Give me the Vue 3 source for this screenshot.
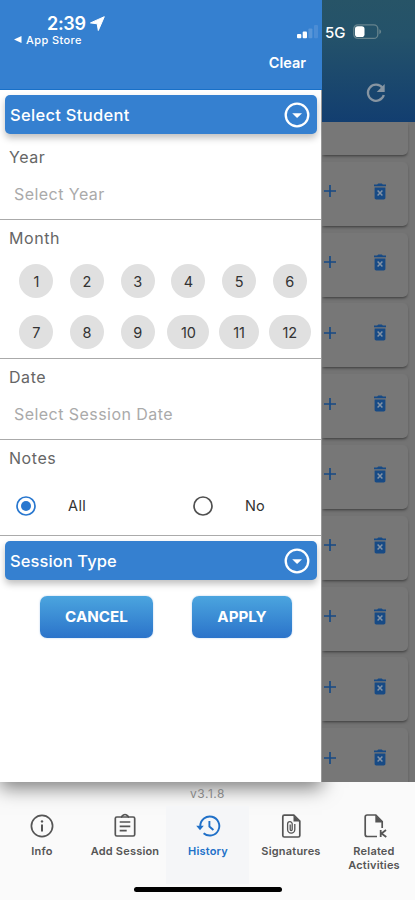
<script setup>
const months = Array.from({ length: 12 }, (_, i) => i + 1)
const rows = Array.from({ length: 9 }, (_, i) => i)
const tabs = [
  { id: 'info', label: 'Info' },
  { id: 'add', label: 'Add Session' },
  { id: 'history', label: 'History', active: true },
  { id: 'sign', label: 'Signatures' },
  { id: 'related', label: 'Related Activities' }
]
</script>

<template>
  <div class="screen">
    <div class="main">
      <aside class="drawer">
        <header class="drawer-head">
          <div class="status">
            <div class="clock">
              <div class="time">
                <span>2:39</span>
                <svg width="15" height="15" viewBox="0 0 15 15"><path d="M14.3.7 0.5 6.9 7.2 7.8 8.3 14.5Z" fill="#fff" stroke="#fff" stroke-linejoin="round" /></svg>
              </div>
              <div class="back">
                <svg width="8" height="7" viewBox="0 0 8 7"><path d="M0 3.5 7.5 0V7Z" fill="#fff" /></svg>
                <span>App Store</span>
              </div>
            </div>
            <svg class="signal" width="22" height="14" viewBox="0 0 22 14">
              <rect x="0" y="9" width="4.3" height="4.3" rx="1" fill="#fff" />
              <rect x="5.7" y="6.4" width="4.3" height="6.9" rx="1" fill="#fff" />
              <rect x="11.4" y="3.5" width="4" height="9.8" rx="1" fill="#5996d8" />
              <rect x="17" y="0" width="4" height="13.3" rx="1" fill="#4c8dd5" />
            </svg>
          </div>
          <div class="clear">Clear</div>
        </header>

        <div class="bar">
          <span class="student">Select Student</span>
          <svg width="26" height="26" viewBox="0 0 26 26"><circle cx="13" cy="13" r="11.3" fill="none" stroke="#fff" stroke-width="2.3" /><path d="M8.2 11.3h9.8L13.1 16Z" fill="#fff" /></svg>
        </div>

        <section class="field year">
          <div class="label">Year</div>
          <div class="hint hint-year">Select Year</div>
        </section>
        <section class="field month">
          <div class="label">Month</div>
          <div class="chips">
            <div v-for="m in months" :key="m" class="cell">
              <span class="chip" :class="{ wide: m > 9, eleven: m === 11 }">{{ m }}</span>
            </div>
          </div>
        </section>
        <section class="field date">
          <div class="label">Date</div>
          <div class="hint">Select Session Date</div>
        </section>
        <section class="field notes">
          <div class="label">Notes</div>
          <div class="radios">
            <div class="radio">
              <svg width="20" height="20" viewBox="0 0 20 20"><circle cx="10" cy="10" r="9" fill="none" stroke="#2877cf" stroke-width="1.7" /><circle cx="10" cy="10" r="5" fill="#2877cf" /></svg>
              <span>All</span>
            </div>
            <div class="radio">
              <svg width="20" height="20" viewBox="0 0 20 20"><circle cx="10" cy="10" r="9" fill="none" stroke="#505050" stroke-width="1.7" /></svg>
              <span>No</span>
            </div>
          </div>
        </section>

        <div class="bar">
          <span class="type">Session Type</span>
          <svg width="26" height="26" viewBox="0 0 26 26"><circle cx="13" cy="13" r="11.3" fill="none" stroke="#fff" stroke-width="2.3" /><path d="M8.2 11.3h9.8L13.1 16Z" fill="#fff" /></svg>
        </div>
        <div class="actions">
          <button class="cancel">CANCEL</button>
          <button class="apply">APPLY</button>
        </div>
      </aside>

      <div class="page">
        <header class="page-head">
          <div class="net">
            <span>5G</span>
            <svg width="29" height="16" viewBox="0 0 29 16"><rect x=".8" y=".8" width="24" height="13.6" rx="4" fill="none" stroke="#66838d" stroke-width="1.3" /><rect x="2" y="2.3" width="9.5" height="10.7" rx="2.8" fill="#fff" /><path d="M26.3 5.2c2.4.8 2.4 4 0 4.8Z" fill="#66838d" /></svg>
          </div>
          <svg class="refresh" width="20" height="20" viewBox="0 0 20 20"><path d="M16.5 4.8A8.1 8.1 0 1 0 17.8 12" fill="none" stroke="#8795a2" stroke-width="2.3" /><path d="M18.7.9V9h-8Z" fill="#8795a2" /></svg>
        </header>
        <div class="list">
          <div class="card first"></div>
          <div v-for="r in rows" :key="r" class="card">
            <svg width="12" height="12" viewBox="0 0 12 12"><path d="M6 0V12M0 6H12" stroke="#174a85" stroke-width="1.7" /></svg>
            <svg width="12" height="17" viewBox="0 0 12 17"><path d="M0 1.6h3.2L4.2.4h3.6l1 1.2H12v1.7H0ZM.6 4.4h10.8v10.4c0 1-.7 1.7-1.7 1.7H2.3c-1 0-1.7-.7-1.7-1.7Z" fill="#174a85" /><path d="m3.6 7.4 4.8 5M8.4 7.4l-4.8 5" stroke="#8392a4" stroke-width="1.5" /></svg>
          </div>
        </div>
      </div>
    </div>

    <footer class="footer">
      <div class="version">v3.1.8</div>
      <nav class="tabs">
        <div v-for="t in tabs" :key="t.id" class="tab" :class="[t.id, { active: t.active }]">
          <svg width="26" height="26" viewBox="0 0 26 26" fill="none" stroke="currentColor" stroke-width="1.7">
            <template v-if="t.id === 'info'">
              <circle cx="13" cy="13" r="10.6" />
              <path d="M13 11.6v7" stroke-width="2" /><circle cx="13" cy="8.4" r="1.2" fill="currentColor" stroke="none" />
            </template>
            <template v-else-if="t.id === 'add'">
              <rect x="3.3" y="4" width="19.4" height="19" rx="1.5" />
              <path d="M9 4.2C9.8 4.2 10.5 1.5 13 1.5S16.200 4.2 17 4.2" />
              <path d="M7.700 9h10.600M7.700 13.300h10.600M7.700 17.700h7" />
            </template>
            <template v-else-if="t.id === 'history'">
              <path d="M5.300 14.500V13a9.500 9.500 0 1 1 3.300 7.200" stroke-width="1.900" />
              <path d="M1.200 12.700h7.600l-3.800 4.600Z" fill="currentColor" stroke="none" />
              <path d="M14.400 8v5.500l4 3.500" stroke-width="1.900" />
            </template>
            <template v-else-if="t.id === 'sign'">
              <path d="M6.300 2.200h9.500l6 6V22.500a1.500 1.500 0 0 1-1.500 1.500H6.300a1.500 1.500 0 0 1-1.500-1.500V3.700a1.500 1.500 0 0 1 1.500-1.500Z" />
              <path d="M15.500 2.500v6h6Z" fill="currentColor" stroke="none" />
              <path d="M16.800 11v5.600a3.600 3.600 0 0 1-7.200 0V11a2.300 2.300 0 0 1 4.600 0v5.600a1 1 0 0 1-2 0V11.500" stroke-width="1.300" />
            </template>
            <template v-else>
              <path d="M16 23.500H6.200a2 2 0 0 1-2-2V4a2 2 0 0 1 2-2h8.600l6.400 6.700V15" />
              <path d="M14.300 2v7.500h7.300Z" fill="currentColor" stroke="none" />
              <path d="M19.700 17v7M25 17l-4.500 3.500L25.300 24" stroke-width="1.800" />
            </template>
          </svg>
          <span class="caption">{{ t.label }}</span>
        </div>
      </nav>
      <div class="home"></div>
    </footer>
  </div>
</template>

<style>
body { background: #fafafa; }
</style>

<style scoped>
* { box-sizing: border-box; }
svg { display: block; flex: none; }
.screen { width: 415px; height: 900px; display: flex; flex-direction: column; background: #fafafa; font-family: Inter, "Liberation Sans", sans-serif; overflow: hidden; }
.main { display: flex; height: 782px; flex: none; }
.drawer { width: 322px; flex: none; background: #fff; box-shadow: 0 6px 18px rgba(0, 0, 0, .5); border-right: 1px solid #999; display: flex; flex-direction: column; }
.drawer-head { width: 322px; height: 90px; flex: none; background: #3580d0; border-bottom: 1px solid #1870c8; color: #fff; }
.status { display: flex; justify-content: space-between; padding: 14px 3px 0 14px; height: 52px; }
.time { display: flex; gap: 4px; padding-left: 33px; height: 19px; font-size: 18px; line-height: 19px; font-weight: 600; letter-spacing: -.3px; }
.time svg { margin-top: 2px; }
.back { display: flex; align-items: center; gap: 4px; height: 13px; font-size: 11px; font-weight: 500; letter-spacing: .4px; }
.signal { margin-top: 11px; }
.clear { padding-right: 16px; text-align: right; font-size: 14.500px; line-height: 21px; font-weight: 600; }
.bar { height: 39px; margin: 5px 4px 0 5px; padding: 0 7px 0 5px; flex: none; display: flex; align-items: center; justify-content: space-between; border-radius: 5px; background: #3580d0; color: #fff; font-size: 16.500px; font-weight: 550; box-shadow: 0 4px 7px rgba(0, 0, 0, .25); }
.student { letter-spacing: .3px; }
.type { letter-spacing: .1px; }
.field { flex: none; border-bottom: 1.500px solid #aaa; padding-left: 9px; color: #666; }
.year { height: 86px; padding-top: 13px; }
.month { height: 139px; padding-top: 8px; }
.date { height: 81px; padding-top: 8px; }
.notes { height: 96px; padding-top: 8px; }
.label { font-size: 16px; line-height: 20px; letter-spacing: .55px; }
.hint { padding: 17px 0 0 5px; font-size: 16px; line-height: 20px; letter-spacing: .45px; color: #aaa; }
.chips { display: grid; grid-template-columns: repeat(6, 50.700px); grid-auto-rows: 34px; row-gap: 17px; margin-top: 16px; padding-left: 2px; }
.cell { display: flex; justify-content: center; }
.chip { width: 34px; height: 34px; border-radius: 17px; background: #e0e0e0; color: #333; display: flex; align-items: center; justify-content: center; font-size: 14.500px; }
.chip.wide { width: 42px; }
.chip.eleven { width: 40px; }
.radios { display: flex; padding: 28px 0 0 7px; }
.radio { width: 177px; display: flex; align-items: center; gap: 32px; font-size: 14.500px; line-height: 20px; color: #333; }
.radio:first-child { letter-spacing: .4px; }
.radio:last-child { width: auto; }
.actions { display: flex; gap: 39px; padding: 16px 0 0 40px; }
button { height: 41.500px; border: 0; border-radius: 7px; padding: 0; background: linear-gradient(#4ba5df, #2b73ca); color: #fff; font: 700 15.200px Inter, sans-serif; box-shadow: 0 0 2px rgba(53, 128, 208, .4); }
.cancel { width: 113px; }
.apply { width: 100px; }
.page { flex: 1; min-width: 0; background: #737373; display: flex; flex-direction: column; overflow: hidden; }
.page-head { height: 122px; flex: none; background: linear-gradient(#275467, #24526a 30%, #123e70); }
.net { display: flex; align-items: center; gap: 7px; padding: 23px 0 0 3px; height: 41px; color: #fff; font-size: 15px; font-weight: 500; }
.refresh { margin: 42px 0 0 44px; }
.list { flex: 1; min-height: 0; overflow: hidden; }
.card { width: 86px; height: 64px; margin-bottom: 6.800px; padding: 0 22px 5px 2px; background: #777; border-radius: 0 5px 5px 0; box-shadow: 0 2px 3px -1px rgba(0, 0, 0, .5); display: flex; align-items: center; justify-content: space-between; }
.card.first { height: 33px; border-top-right-radius: 0; }
.footer { flex: 1; display: flex; flex-direction: column; align-items: center; }
.version { height: 24px; line-height: 24px; font-size: 12px; letter-spacing: .5px; color: #858585; }
.tabs { width: 415px; height: 78px; display: grid; grid-template-columns: repeat(5, 83px); color: #555; }
.tab { display: flex; flex-direction: column; align-items: center; padding-top: 7px; text-align: center; }
.tab.active { color: #2070c8; background: #f5f6f8; }
.caption { margin-top: 6px; padding-left: 1px; font-size: 11px; line-height: 13.500px; font-weight: 600; letter-spacing: .2px; }
.home { width: 148px; height: 5px; border-radius: 3px; background: #000; margin-top: 3px; }
</style>
